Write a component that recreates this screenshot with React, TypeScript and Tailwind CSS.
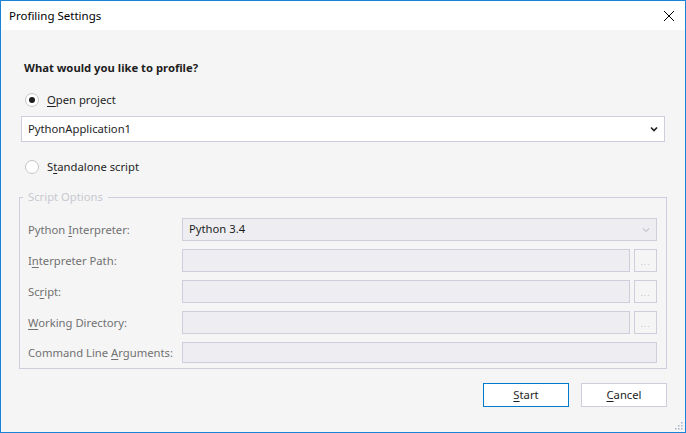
import React from "react";

const font = { fontFamily: '"Noto Sans", "Open Sans", sans-serif' };

const Radio: React.FC<{ checked?: boolean; children: React.ReactNode }> = ({ checked, children }) => (
  <div className="flex items-center h-4 ml-[6px]">
    <span className="w-[14px] h-[14px] rounded-full border border-[#c6c6c6] bg-white flex items-center justify-center">
      {checked && <span className="w-[6px] h-[6px] rounded-full bg-[#1e1e1e]" />}
    </span>
    <span className="ml-[8px] text-[11.25px] text-[#1e1e1e] leading-4">{children}</span>
  </div>
);

const U: React.FC<{ children: React.ReactNode }> = ({ children }) => (
  <span className="underline underline-offset-2">{children}</span>
);

const Field: React.FC<{ browse?: boolean; h?: string; children?: React.ReactNode }> = ({ browse, h = "h-[23px]", children }) => (
  <div className={`flex-1 flex gap-[4px] ${h}`}>
    <div className="flex-1 border border-[#cccedb] bg-[#eeeef2] flex items-center pl-[6px] text-[11.25px] text-[#1e1e1e]">
      {children}
    </div>
    {browse && (
      <div className="w-[23px] border border-[#cccedb] bg-[#f5f5f5] flex items-end justify-center pb-[5px]">
        <span className="text-[9px] leading-none text-[#c0c2cc] tracking-[1px]">...</span>
      </div>
    )}
  </div>
);

const Row: React.FC<{ label: React.ReactNode; children: React.ReactNode }> = ({ label, children }) => (
  <div className="flex items-center">
    <div className="w-[154px] whitespace-nowrap text-[11.25px] text-[#717171] leading-4">{label}</div>
    {children}
  </div>
);

export default function App() {
  return (
    <div style={font} className="w-[686px] h-[433px] border border-[#1883d7] bg-[#f5f5f5] flex flex-col relative">
      <div className="h-[29px] bg-white flex items-center justify-between pl-[8px] pr-[9px]">
        <span className="text-[11.5px] text-black">Profiling Settings</span>
        <svg width="12" height="12" viewBox="0 0 12 12" className="mr-[1px]">
          <path d="M1 1L11 11M11 1L1 11" stroke="#000" strokeWidth="1" />
        </svg>
      </div>

      <div className="flex flex-col px-[18px]">
        <div className="mt-[30px] ml-[5px] text-[11.25px] font-bold leading-4 text-[#1e1e1e]">
          What would you like to profile?
        </div>

        <div className="mt-[16px]">
          <Radio checked>
            <U>O</U>pen project
          </Radio>
        </div>

        <div className="mt-[8px] mx-[2px] h-[26px] bg-white border border-[#cccedb] flex items-center justify-between pl-[6px] pr-[6px]">
          <span className="text-[11.25px] text-[#1e1e1e]">PythonApplication1</span>
          <svg width="8" height="6" viewBox="0 0 8 6">
            <path d="M1 1.5L4 4.5L7 1.5" stroke="#1e1e1e" strokeWidth="1.6" fill="none" />
          </svg>
        </div>

        <div className="mt-[17px]">
          <Radio>
            S<U>t</U>andalone script
          </Radio>
        </div>

        <fieldset className="mt-[14px] border border-[#cccedb] pl-[8px] pr-[9px] pb-[5px]">
          <legend className="ml-[-5px] px-[5px] text-[11.25px] leading-4 text-[#c8c9d2]">Script Options</legend>
          <div className="mt-[13px] flex flex-col gap-[8px]">
            <Row
              label={
                <>
                  Python <U>I</U>nterpreter:
                </>
              }
            >
              <div className="flex-1 h-[23px] border border-[#cccedb] bg-[#eeeef2] flex items-center justify-between pl-[6px] pr-[6px] text-[11.25px] text-[#1e1e1e]">
                <span>Python 3.4</span>
                <svg width="8" height="6" viewBox="0 0 8 6">
                  <path d="M1 1.5L4 4.5L7 1.5" stroke="#c4c6d0" strokeWidth="1.2" fill="none" />
                </svg>
              </div>
            </Row>
            <Row
              label={
                <>
                  I<U>n</U>terpreter Path:
                </>
              }
            >
              <Field browse />
            </Row>
            <Row
              label={
                <>
                  Sc<U>r</U>ipt:
                </>
              }
            >
              <Field browse />
            </Row>
            <Row
              label={
                <>
                  <U>W</U>orking Directory:
                </>
              }
            >
              <Field browse />
            </Row>
            <Row
              label={
                <>
                  Command Line <U>A</U>rguments:
                </>
              }
            >
              <Field h="h-[21px]" />
            </Row>
          </div>
        </fieldset>

        <div className="mt-[14px] flex justify-end gap-[12px]">
          <button className="w-[86px] h-[24px] border border-[#007acc] bg-white text-[11.25px] text-[#1e1e1e]">
            <U>S</U>tart
          </button>
          <button className="w-[86px] h-[24px] border border-[#cccedb] bg-white text-[11.25px] text-[#1e1e1e]">
            <U>C</U>ancel
          </button>
        </div>
      </div>

      <svg width="10" height="10" viewBox="0 0 10 10" className="absolute right-[2px] bottom-[2px]">
        {[
          [8, 0],
          [8, 3],
          [5, 3],
          [8, 6],
          [5, 6],
          [2, 6],
        ].map(([x, y], i) => (
          <rect key={i} x={x} y={y + 2} width="1.5" height="1.5" fill="#a8b4c8" />
        ))}
      </svg>
    </div>
  );
}
